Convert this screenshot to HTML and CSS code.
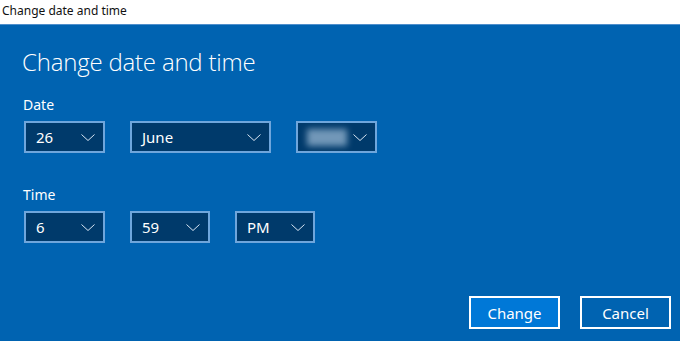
FILE: index.html
```html
<!DOCTYPE html>
<html lang="en">
<head>
  <meta charset="UTF-8" />
  <title>Change date and time</title>
  <meta name="viewport" content="width=device-width, initial-scale=1.0"/>
  <link rel="stylesheet" href="styles.css">
</head>
<body>
  <div class="title-bar">Change date and time</div>

  <div class="dialog">
    <h1>Change date and time</h1>

    <div class="field">
      <label>Date</label>
      <div class="picker-row">
        <div class="picker w-81"><span>26</span><svg class="chev" viewBox="0 0 14 7"><path d="M0.5 0.5 L7 6.5 L13.5 0.5"/></svg></div>
        <div class="picker w-141"><span>June</span><svg class="chev" viewBox="0 0 14 7"><path d="M0.5 0.5 L7 6.5 L13.5 0.5"/></svg></div>
        <div class="picker w-81"><span class="blur"></span><svg class="chev" viewBox="0 0 14 7"><path d="M0.5 0.5 L7 6.5 L13.5 0.5"/></svg></div>
      </div>
    </div>

    <div class="field time">
      <label>Time</label>
      <div class="picker-row">
        <div class="picker w-81"><span>6</span><svg class="chev" viewBox="0 0 14 7"><path d="M0.5 0.5 L7 6.5 L13.5 0.5"/></svg></div>
        <div class="picker w-80"><span>59</span><svg class="chev" viewBox="0 0 14 7"><path d="M0.5 0.5 L7 6.5 L13.5 0.5"/></svg></div>
        <div class="picker w-80"><span>PM</span><svg class="chev" viewBox="0 0 14 7"><path d="M0.5 0.5 L7 6.5 L13.5 0.5"/></svg></div>
      </div>
    </div>

    <div class="actions">
      <button class="btn primary">Change</button>
      <button class="btn">Cancel</button>
    </div>
  </div>
</body>
</html>
```

FILE: styles.css
```css
* {
  margin: 0;
  padding: 0;
  box-sizing: border-box;
}

body {
  font-family: 'Noto Sans', 'Open Sans', sans-serif;
  background: #0063b1;
  width: 680px;
  height: 341px;
  overflow: hidden;
}

.title-bar {
  height: 25px;
  background: #ffffff;
  border-bottom: 1px solid #4f8fcc;
  color: #111;
  font-size: 12px;
  line-height: 22px;
  padding-left: 2px;
}

.dialog {
  padding: 21px 0 0 22px;
  color: #ffffff;
  display: flex;
  flex-direction: column;
  height: 316px;
}

.dialog h1 {
  font-family: 'Open Sans', 'Noto Sans', sans-serif;
  font-weight: 300;
  font-size: 24px;
  line-height: 32px;
  letter-spacing: -0.2px;
}

.field {
  margin-top: 18px;
}

.field.time {
  margin-top: 33px;
}

.field label {
  display: block;
  font-size: 14px;
  line-height: 18px;
  padding-left: 1px;
}

.picker-row {
  display: flex;
  gap: 25px;
  margin-top: 7px;
  padding-left: 2px;
}

.picker {
  height: 32px;
  border: 2px solid #6fa6dc;
  background: #003a6b;
  display: flex;
  align-items: center;
  justify-content: space-between;
  padding: 0 8px 0 10px;
  font-size: 15px;
}

.w-81 { width: 81px; }
.w-80 { width: 80px; }
.w-141 { width: 141px; }

.chev {
  width: 14px;
  height: 7px;
  fill: none;
  stroke: #d8e6f3;
  stroke-width: 1;
}

.blur {
  width: 40px;
  height: 17px;
  background: #86a8c6;
  filter: blur(3px);
  opacity: 0.85;
  margin-left: -1px;
}

.actions {
  margin-top: auto;
  margin-bottom: 12px;
  display: flex;
  justify-content: flex-end;
  gap: 20px;
  padding-right: 9px;
}

.btn {
  width: 91px;
  height: 33px;
  border: 2px solid #ffffff;
  background: #0063b1;
  color: #ffffff;
  font-family: 'Noto Sans', 'Open Sans', sans-serif;
  font-size: 15px;
}

.btn.primary {
  background: #0078d7;
}
```
